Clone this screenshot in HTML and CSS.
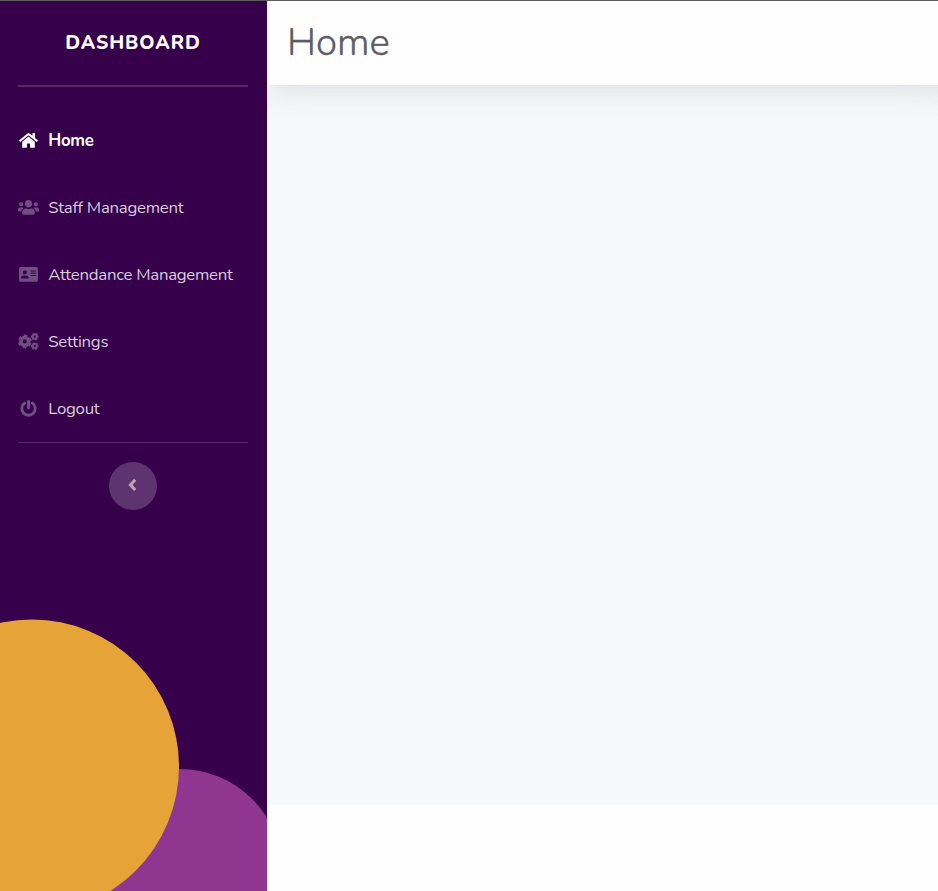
FILE: index.html
```html
<!DOCTYPE html>
<html lang="en">
<head>
<meta charset="utf-8">
<title>Home</title>
<link rel="stylesheet" href="styles.css">
</head>
<body>
<div class="layout">
  <aside class="sidebar">
    <div class="brand">DASHBOARD</div>
    <hr class="divider divider-top">
    <nav class="menu">
      <a class="item active">
        <svg class="icon" viewBox="-32 0 640 512"><path d="M280.37 148.26L96 300.11V464a16 16 0 0 0 16 16l112.06-.29a16 16 0 0 0 15.92-16V368a16 16 0 0 1 16-16h64a16 16 0 0 1 16 16v95.64a16 16 0 0 0 16 16.05L464 480a16 16 0 0 0 16-16V300L295.67 148.26a12.19 12.19 0 0 0-15.3 0zM571.6 251.47L488 182.56V44.05a12 12 0 0 0-12-12h-56a12 12 0 0 0-12 12v72.61L318.47 43a48 48 0 0 0-61 0L4.34 251.47a12 12 0 0 0-1.6 16.9l25.5 31A12 12 0 0 0 45.15 301l235.22-193.74a12.19 12.19 0 0 1 15.3 0L530.9 301a12 12 0 0 0 16.9-1.6l25.5-31a12 12 0 0 0-1.7-16.93z"/></svg>
        <span class="label">Home</span></a>
      <a class="item">
        <svg class="icon" viewBox="0 0 640 512"><path d="M96 224c35.3 0 64-28.7 64-64s-28.7-64-64-64-64 28.7-64 64 28.7 64 64 64zm448 0c35.3 0 64-28.7 64-64s-28.7-64-64-64-64 28.7-64 64 28.7 64 64 64zm32 32h-64c-17.6 0-33.5 7.1-45.1 18.6 40.3 22.1 68.9 62 75.1 109.4h66c17.7 0 32-14.3 32-32v-32c0-35.3-28.7-64-64-64zm-256 0c61.9 0 112-50.1 112-112S381.9 32 320 32 208 82.1 208 144s50.1 112 112 112zm76.8 32h-8.3c-20.8 10-43.9 16-68.5 16s-47.6-6-68.5-16h-8.3C179.6 288 128 339.6 128 403.2V432c0 26.5 21.5 48 48 48h288c26.5 0 48-21.5 48-48v-28.8c0-63.6-51.6-115.2-115.2-115.2zm-223.7-13.4C161.5 263.1 145.6 256 128 256H64c-35.3 0-64 28.7-64 64v32c0 17.7 14.3 32 32 32h65.9c6.3-47.4 34.9-87.3 75.2-109.4z"/></svg>
        <span class="label">Staff Management</span></a>
      <a class="item">
        <svg class="icon" viewBox="-32 0 640 512"><path fill-rule="evenodd" d="M48 32h480a48 48 0 0 1 48 48v352a48 48 0 0 1-48 48H48a48 48 0 0 1-48-48V80a48 48 0 0 1 48-48zM176 128a64 64 0 1 0 0 128 64 64 0 0 0 0-128zM131 288c-37 0-67 26-67 58v19c0 10 10 19 22 19h180c12 0 22-9 22-19v-19c0-32-30-58-67-58-14 0-20 8-45 8s-33-8-45-8zM352 136h160v30H352zM352 204h160v30H352zM352 272h160v30H352z"/></svg>
        <span class="label">Attendance Management</span></a>
      <a class="item">
        <svg class="icon" viewBox="0 0 640 512">
          <g fill="none" stroke="currentColor">
            <circle cx="208" cy="256" r="118" stroke-width="108"/>
            <circle cx="208" cy="256" r="182" stroke-width="56" stroke-dasharray="105 85.6" stroke-dashoffset="-43"/>
            <circle cx="512" cy="112" r="64" stroke-width="62"/>
            <circle cx="512" cy="112" r="101" stroke-width="34" stroke-dasharray="60 45.8" stroke-dashoffset="30"/>
            <circle cx="512" cy="400" r="64" stroke-width="62"/>
            <circle cx="512" cy="400" r="101" stroke-width="34" stroke-dasharray="60 45.8" stroke-dashoffset="30"/>
          </g></svg>
        <span class="label">Settings</span></a>
      <a class="item">
        <svg class="icon" viewBox="-64 0 640 512"><g fill="none" stroke="currentColor" stroke-linecap="round"><path stroke-width="88" d="M140 92a205 205 0 1 0 232 0"/><path stroke-width="90" d="M256 42v200"/></g></svg>
        <span class="label">Logout</span></a>
    </nav>
    <hr class="divider">
    <button class="toggle" aria-label="Collapse menu"><svg viewBox="0 0 12 16"><path d="M9.2 2.8 4.4 7.9l4.8 5.1"/></svg></button>
    <svg class="decor" viewBox="0 0 267 291"><circle class="plum" cx="180" cy="271" r="102"/><circle class="amber" cx="32" cy="166.5" r="147"/></svg>
  </aside>
  <main class="content">
    <header class="topbar"><h1>Home</h1></header>
    <section class="panel"></section>
  </main>
</div>
</body>
</html>
```
FILE: styles.css
```css
* { box-sizing: border-box; }
body {
  margin: 0;
  overflow: hidden;
  font-family: Nunito, Lato, "Open Sans", sans-serif;
  background: #fefefe;
}
.layout {
  display: flex;
  height: 891px;
  border-top: 1px solid #5f5f5f;
}
.sidebar {
  position: relative;
  display: flex;
  flex-direction: column;
  align-items: center;
  width: 267px;
  flex: none;
  overflow: hidden;
  background: #36004b;
}
.brand {
  height: 84px;
  margin-right: 1px;
  line-height: 84px;
  font-size: 19.2px;
  font-weight: 800;
  letter-spacing: .96px;
  color: #fff;
}
.divider {
  width: 230px;
  height: 1px;
  margin: 0 1px 0 0;
  border: 0;
  background: #562868;
}
.divider-top { height: 2px; }
.menu {
  width: 100%;
  padding-top: 20px;
}
.item {
  display: flex;
  align-items: center;
  height: 67px;
  padding-left: 18px;
  gap: 9.2px;
  color: #d7ccdb;
  font-size: 16.8px;
  letter-spacing: -.27px;
}
.icon {
  width: 21px;
  height: 16.8px;
  color: #724d81;
  fill: currentColor;
}
.active, .active .icon { color: #fff; }
.active { font-weight: 700; }
.label { white-space: nowrap; }
.toggle {
  display: flex;
  align-items: center;
  justify-content: center;
  width: 48px;
  height: 48px;
  margin-top: 19px;
  margin-right: 1px;
  padding: 0 2px 2px 0;
  border: 0;
  border-radius: 50%;
  background: #5e336f;
}
.toggle svg {
  width: 12px;
  height: 16px;
  fill: none;
  stroke: #c0a5b0;
  stroke-width: 3;
}
.decor {
  position: absolute;
  left: 0;
  bottom: 0;
  width: 267px;
  height: 291px;
}
.plum { fill: #903690; }
.amber { fill: #e6a338; }
.content {
  flex: 1;
  min-width: 0;
  overflow: hidden;
  background: linear-gradient(#f7f8fc 804px, #fefefe 804px);
}
.topbar {
  height: 84px;
  padding-left: 20px;
  background: #fefefe;
  box-shadow: 0 3px 34px rgba(58, 59, 69, .15), 671px 3px 34px rgba(58, 59, 69, .15);
}
h1 {
  margin: 0;
  line-height: 84px;
  font-size: 38.4px;
  font-weight: 300;
  -webkit-text-stroke: .35px #5a5c69;
  color: #5a5c69;
}
.panel { height: 720px; }
```
